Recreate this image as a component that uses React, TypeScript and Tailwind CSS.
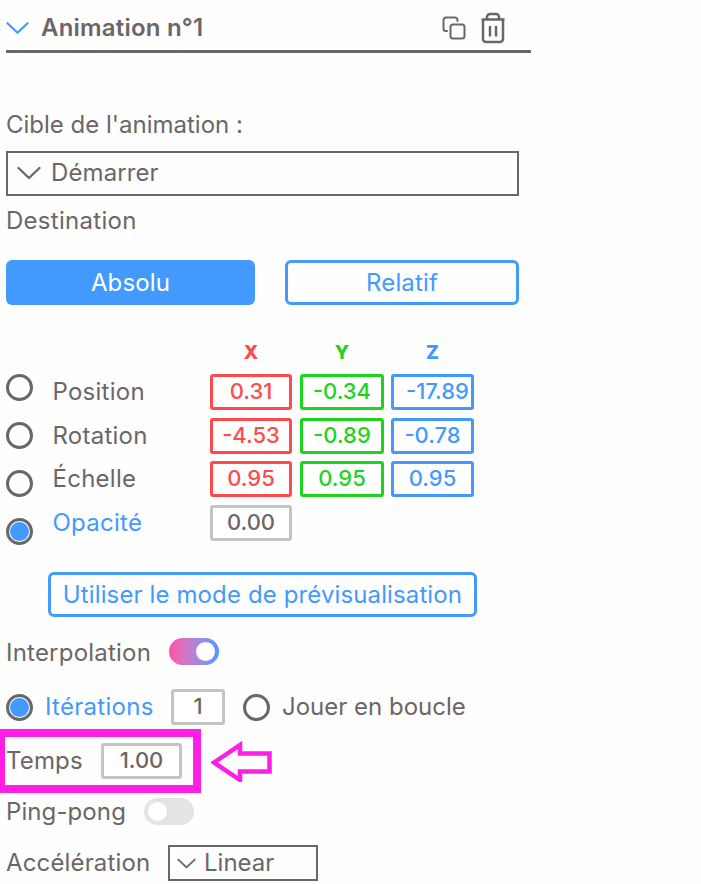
import clsx from 'clsx';

const transforms = [
  { label: 'Position', values: ['0.31', '-0.34', '-17.89'] },
  { label: 'Rotation', values: ['-4.53', '-0.89', '-0.78'] },
  { label: 'Échelle', values: ['0.95', '0.95', '0.95'] },
  { label: 'Opacité', values: ['0.00'], active: true },
];

const axisStyles = [
  'w-[82px] border-[#ff4a4c] text-[#ff4a4c]',
  'w-[84px] ml-2 border-[#1bd41b] text-[#1bd41b]',
  'w-[83px] ml-[7px] border-[#429aff] text-[#429aff]',
];

const grayStyle = 'border-[#c4c4c4] text-[#6c6666]';

function Chevron({ className }: { className?: string }) {
  return (
    <svg viewBox="0 0 24 14" fill="none" stroke="currentColor" strokeWidth="2.3" strokeLinecap="round" strokeLinejoin="round" className={clsx('shrink-0', className)}>
      <path d="M1.5 2L12 12L22.5 2" />
    </svg>
  );
}

function Radio({ checked }: { checked?: boolean }) {
  return (
    <div className="flex size-[27px] shrink-0 items-center justify-center rounded-full border-3 border-[#6c6666] bg-white">
      {checked && <div className="size-[19px] rounded-full bg-[#429aff]" />}
    </div>
  );
}

function NumberField({ value, className }: { value: string; className: string }) {
  // long values keep the left inset and run up to the right border
  const long = value.length > 5;
  return (
    <div
      className={clsx(
        'flex h-9 shrink-0 items-center rounded-[3px] border-3 bg-white pb-[1.4px] text-[22px] font-medium',
        long ? 'justify-start pl-3' : 'justify-center',
        className
      )}
    >
      {value}
    </div>
  );
}

function Toggle({ on }: { on?: boolean }) {
  return (
    <div
      className={clsx(
        'flex h-[27px] w-[50px] shrink-0 items-center rounded-full px-1',
        on ? 'justify-end bg-linear-to-r from-[#ff4fa8] to-[#429aff]' : 'bg-[#e4e4e4]'
      )}
    >
      <div className="size-[19px] rounded-full bg-white" />
    </div>
  );
}

export default function App() {
  return (
    <div className="h-[884px] w-[701px] overflow-hidden bg-[#fefefe] font-['Inter',sans-serif] text-[24px] leading-[30px] whitespace-nowrap text-[#6c6666]">
      <div className="flex w-[531px] flex-col pl-1.5">
        <header className="flex h-[53px] items-center border-b-3 border-[#6c6666] pt-1.5">
          <Chevron className="h-[14px] w-[23px] text-[#429aff]" />
          <h1 className="ml-3 font-semibold tracking-[0.2px]">Animation n°1</h1>
          <svg viewBox="0 0 24 24" fill="none" stroke="currentColor" strokeWidth="2" strokeLinecap="round" className="mr-[14px] ml-auto size-6">
            <rect x="8.5" y="8.5" width="14" height="14" rx="2.5" />
            <path d="M5 15H4a2.5 2.5 0 0 1-2.5-2.5V4A2.5 2.5 0 0 1 4 1.5h9A2.5 2.5 0 0 1 15.5 4v1" />
          </svg>
          <svg viewBox="0 0 26 32" fill="none" stroke="currentColor" strokeWidth="2.5" strokeLinecap="round" strokeLinejoin="round" className="mr-[25px] h-8 w-[26px]">
            <path d="M2.5 7.5h21M3 7.5V27a3 3 0 0 0 3 3h14a3 3 0 0 0 3-3V7.5M7 7V5a3 3 0 0 1 3-3h6a3 3 0 0 1 3 3v2M10 15v8.5M16 15v8.5" />
          </svg>
        </header>

        <p className="mt-[57px]">Cible de l'animation :</p>
        <div className="mt-[11px] mr-3 flex h-[45px] items-center border-2 border-[#6c6666] pb-0.5 pl-[9px]">
          <Chevron className="h-[14px] w-6" />
          <span className="ml-2.5 tracking-[0.1px]">Démarrer</span>
        </div>
        <p className="mt-2.5 tracking-[0.28px]">Destination</p>

        <div className="mt-[24px] mr-3 flex h-[45px] gap-[30px] tracking-[0.15px]">
          <div className="flex w-[249px] items-center justify-center rounded-md bg-[#429aff] text-white">Absolu</div>
          <div className="flex flex-1 items-center justify-center rounded-md border-3 border-[#429aff] text-[#429aff]">Relatif</div>
        </div>

        <div className="mt-[33px] flex h-9 pl-[204px] text-[19px] font-extrabold">
          <span className="w-[82px] text-center text-[#ff4a4c]">X</span>
          <span className="ml-2 w-[84px] text-center text-[#1bd41b]">Y</span>
          <span className="ml-[7px] w-[83px] text-center text-[#429aff]">Z</span>
        </div>
        <div className="flex">
          <div className="flex w-[46px] flex-col gap-[21px]">
            {transforms.map((row) => (
              <Radio key={row.label} checked={row.active} />
            ))}
          </div>
          <div className="flex flex-col gap-[7.5px]">
            {transforms.map((row) => (
              <div key={row.label} className="flex h-9 items-center">
                <span className={clsx('w-[158px] pl-[0.5px] tracking-[0.25px]', row.active && 'text-[#429aff]')}>{row.label}</span>
                {row.values.map((value, i) => (
                  <NumberField key={i} value={value} className={row.active ? 'w-[82px] ' + grayStyle : axisStyles[i]} />
                ))}
              </div>
            ))}
          </div>
        </div>

        <div className="mt-[27px] ml-[42px] flex h-[45px] w-[429px] items-center justify-center rounded-md border-3 border-[#429aff] tracking-[0.12px] text-[#429aff]">
          Utiliser le mode de prévisualisation
        </div>

        <div className="mt-[21px] flex h-[27px] items-center">
          <span className="w-[163px] pt-0.5 tracking-[0.22px]">Interpolation</span>
          <Toggle on />
        </div>

        <div className="mt-6 flex h-9 items-center">
          <Radio checked />
          <span className="ml-3 w-[126px] tracking-[0.28px] text-[#429aff]">Itérations</span>
          <NumberField value="1" className={clsx('w-[54px]', grayStyle)} />
          <div className="mr-3 ml-[18px]">
            <Radio />
          </div>
          <span>Jouer en boucle</span>
        </div>

        <div className="relative mt-[18px] flex h-9 items-center">
          <span className="w-[95px] tracking-[0.15px]">Temps</span>
          <NumberField value="1.00" className={clsx('w-[81px]', grayStyle)} />
          <div className="absolute -top-[14px] -left-[9px] h-16 w-[204px] border-8 border-[#ff1ee6]" />
          <svg viewBox="0 0 61 41" fill="none" stroke="#ff1ee6" strokeWidth="4.5" className="ml-[29px] h-[41px] w-[61px]">
            <path d="M3 21.5L29 4v8.5h29.5v18H29V39Z" />
          </svg>
        </div>

        <div className="mt-[19px] flex h-[27px] items-center">
          <span className="w-[138px] tracking-[0.1px]">Ping-pong</span>
          <Toggle />
        </div>

        <div className="mt-5 flex h-9 items-center">
          <span className="w-[162px] tracking-[0.15px]">Accélération</span>
          <div className="flex h-9 w-[150px] items-center border-2 border-[#6c6666] pl-[7px]">
            <Chevron className="h-[11px] w-[19px]" />
            <span className="ml-2">Linear</span>
          </div>
        </div>
      </div>
    </div>
  );
}
